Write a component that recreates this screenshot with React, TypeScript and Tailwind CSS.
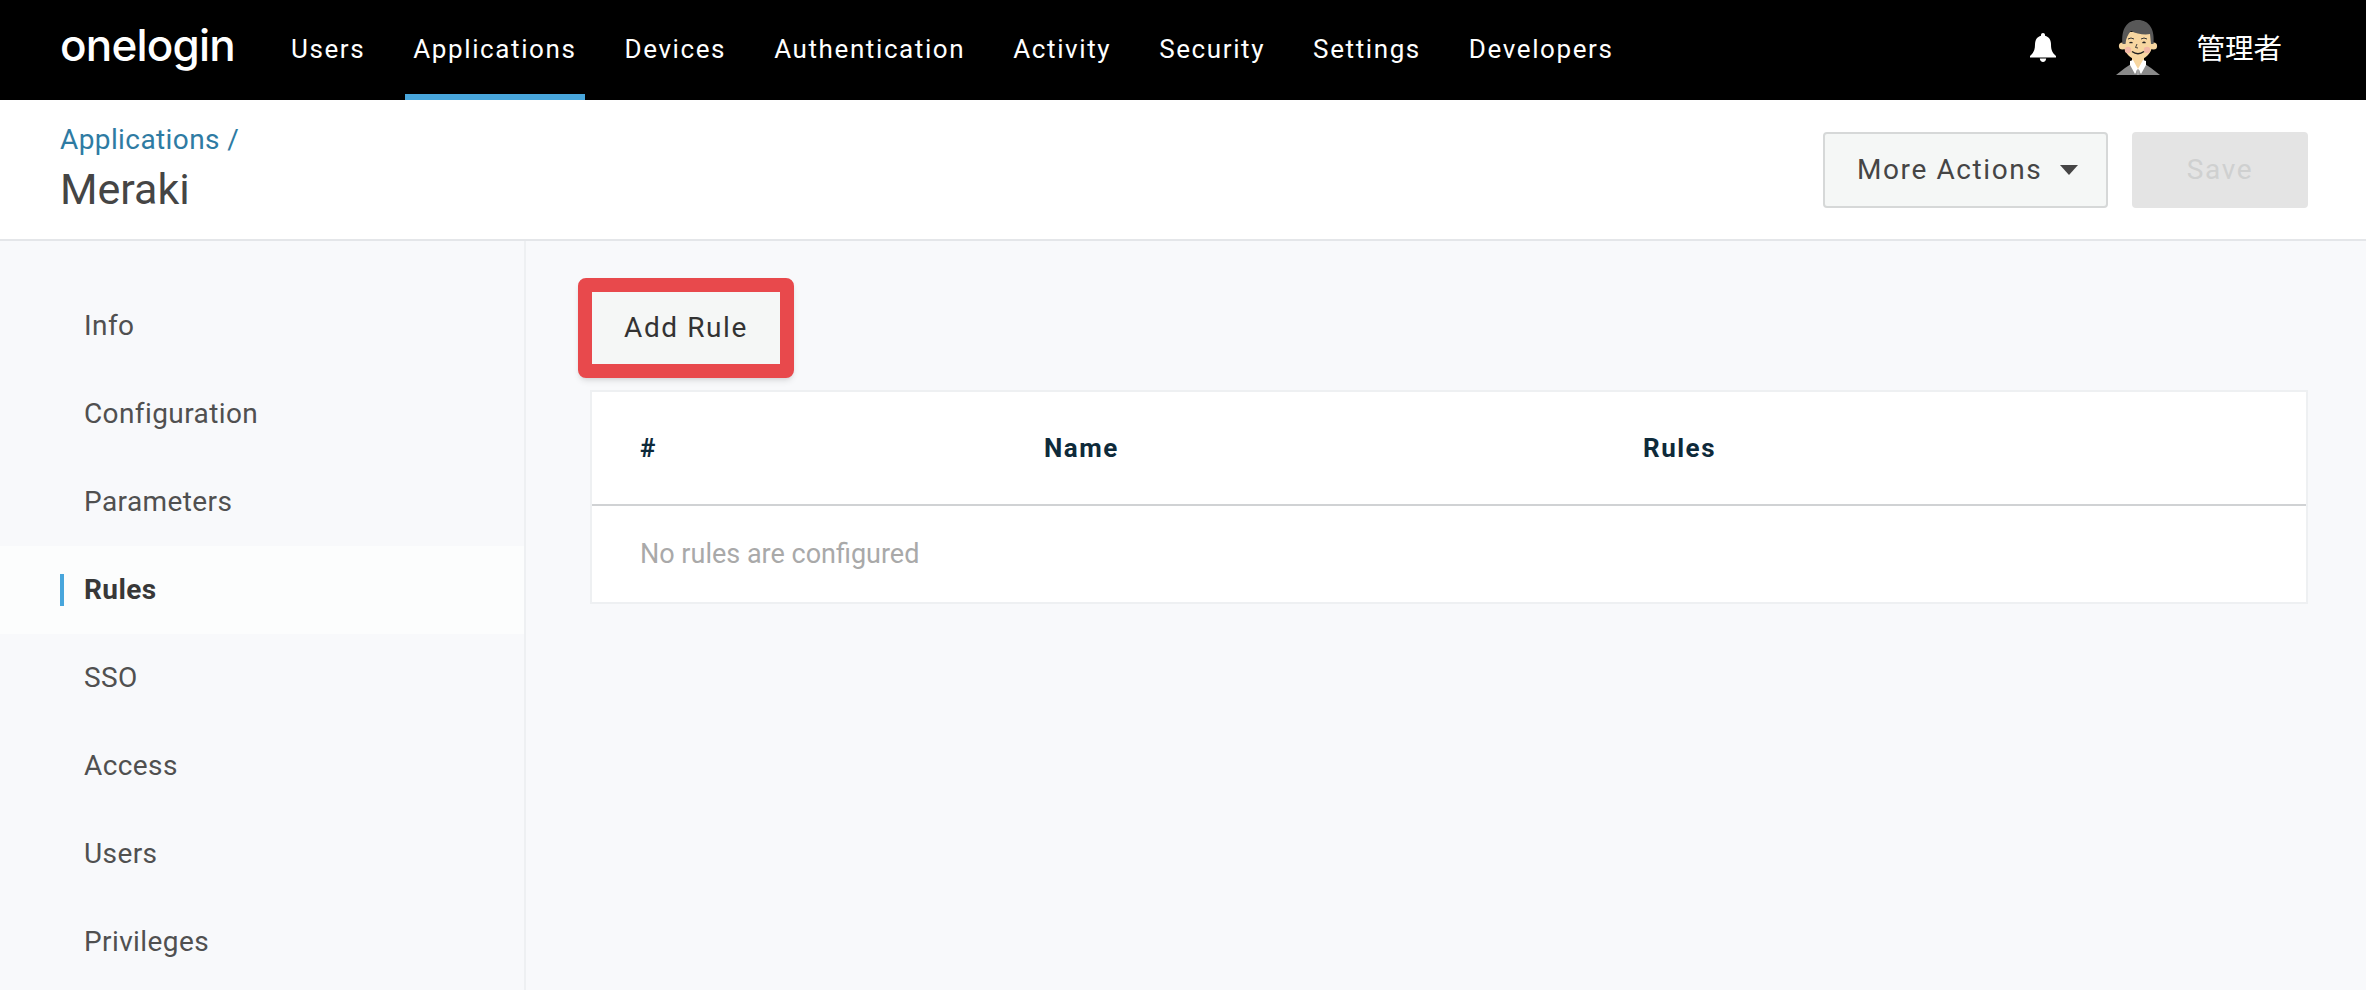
const navItems = [
  "Users",
  "Applications",
  "Devices",
  "Authentication",
  "Activity",
  "Security",
  "Settings",
  "Developers",
];

const sideItems = [
  "Info",
  "Configuration",
  "Parameters",
  "Rules",
  "SSO",
  "Access",
  "Users",
  "Privileges",
];

function Avatar() {
  return (
    <svg viewBox="0 0 44 56" className="h-[56px] w-[44px]">
      <path d="M0 55 L9 48 L15 44 L29 44 L35 48 L44 55 Z" fill="#8a8a8a" />
      <path d="M16 36 H28 V44 L22 50 L16 44 Z" fill="#f7d6a0" />
      <path d="M14 41 L17 40 L22 49 L19 54 L14 45 Z M30 41 L27 40 L22 49 L25 54 L30 45 Z" fill="#ffffff" />
      <path d="M20 51 L22 49 L24 51 L23 55 L21 55 Z" fill="#a5a5a5" />
      <circle cx="6.5" cy="26" r="3.6" fill="#f7d6a0" />
      <circle cx="37.5" cy="26" r="3.6" fill="#f7d6a0" />
      <path d="M8 12 L36 12 L36 26 C36 33 28 40 22 40 C16 40 8 33 8 26 Z" fill="#f7d6a0" />
      <path d="M6.5 24 C5 9 11 0 22 0 C33 0 39 9 37.5 24 L35 24 L34 14 C29 15 20 14 15 11 C12 14 10 18 9.5 24 Z" fill="#585858" />
      <circle cx="12" cy="30" r="3.2" fill="#f2b8a6" />
      <circle cx="31" cy="30" r="3.2" fill="#f2b8a6" />
      <path d="M12 19 Q15 17 18 19 M25 19 Q28 17 31 19" stroke="#333333" strokeWidth="1" fill="none" />
      <path d="M13.5 23 Q15 21.5 16.5 23 M26.5 23 Q28 21.5 29.5 23" stroke="#222222" strokeWidth="1.2" fill="none" />
      <path d="M21 24 L19.5 27.5 L22 28" stroke="#333333" strokeWidth="0.9" fill="none" />
      <path d="M16 31.5 Q22 36 28 31.5" stroke="#222222" strokeWidth="1.4" fill="none" />
    </svg>
  );
}

function Bell() {
  return (
    <svg viewBox="0 0 26 29" className="h-[29px] w-[26px]" fill="#ffffff">
      <path d="M13 0 C14.2 0 15 .9 15 2 L15 2.8 C19 3.8 21 7.2 21 11.5 C21 17 22.5 20 26 23 L26 24.5 L0 24.5 L0 23 C3.5 20 5 17 5 11.5 C5 7.2 7 3.8 11 2.8 L11 2 C11 .9 11.8 0 13 0 Z" />
      <path d="M9.8 25.5 L16.2 25.5 C16 27.6 14.7 29 13 29 C11.3 29 10 27.6 9.8 25.5 Z" />
    </svg>
  );
}

export default function App() {
  return (
    <div className="flex h-[990px] w-full flex-col overflow-hidden bg-[#f8f9fb] font-['Roboto',sans-serif]">
      <header className="flex h-[100px] shrink-0 items-center bg-black pl-[60px] text-white">
        <div className="w-[177px] pb-[10px] font-['Inter',sans-serif] text-[44px] leading-none font-medium tracking-[-0.8px]">
          onelogin
        </div>
        <nav className="ml-[46px] flex h-full">
          {navItems.map((item) => (
            <div
              key={item}
              className={`mr-[32px] flex h-full items-center border-b-[6px] px-[8px] pt-[5px] text-[26px] tracking-[1.6px] ${
                item === "Applications"
                  ? "border-[#48a6dc]"
                  : "border-transparent"
              }`}
            >
              {item}
            </div>
          ))}
        </nav>
        <div className="ml-auto flex items-center pr-[84px] pb-[5px]">
          <Bell />
          <div className="ml-[60px]">
            <Avatar />
          </div>
          <span className="ml-[36px] font-['Noto_Sans_CJK_JP',sans-serif] text-[28.5px] leading-none">
            管理者
          </span>
        </div>
      </header>

      <div className="flex h-[141px] shrink-0 items-center justify-between border-b-2 border-[#e4e6e9] bg-white pr-[58px] pl-[60px]">
        <div className="pb-[3px]">
          <div className="pt-[1px] text-[28px] leading-[32px] tracking-[0.4px] text-[#2e7ba3]">
            Applications /
          </div>
          <div className="mt-[9px] text-[43px] leading-[48px] text-[#454545]">
            Meraki
          </div>
        </div>
        <div className="flex gap-[24px]">
          <div className="flex h-[76px] w-[285px] items-center gap-[18px] rounded-[4px] border-2 border-[#d6d8d8] bg-[#f5f7f6] pl-[32px] text-[28px] tracking-[1.6px] text-[#454545]">
            More Actions
            <svg viewBox="0 0 18 10" className="h-[10px] w-[18px]" fill="#454545">
              <path d="M0 0 H18 L9 10 Z" />
            </svg>
          </div>
          <div className="flex h-[76px] w-[176px] items-center justify-center rounded-[4px] bg-[#e4e4e4] text-[28px] tracking-[1.6px] text-[#cfd0d0]">
            Save
          </div>
        </div>
      </div>

      <div className="flex min-h-0 flex-1">
        <aside className="w-[526px] shrink-0 border-r-2 border-[#eef0f2] pt-[41px]">
          {sideItems.map((item) => {
            const active = item === "Rules";
            return (
              <div
                key={item}
                className={`flex h-[88px] items-center pl-[60px] text-[28px] tracking-[0.4px] ${
                  active
                    ? "bg-[#fcfdfd] font-bold text-[#383838]"
                    : "text-[#505050]"
                }`}
              >
                <span
                  className={`mr-[20px] h-[32px] w-[4px] ${
                    active ? "bg-[#48a6dc]" : "bg-transparent"
                  }`}
                />
                {item}
              </div>
            );
          })}
        </aside>
        <main className="min-w-0 flex-1 pt-[37px] pr-[58px] pl-[52px]">
          <div className="flex h-[100px] w-[216px] items-center justify-center rounded-[8px] border-[14px] border-[#e8494c] bg-[#f5f7f6] text-[28px] tracking-[1.6px] text-[#333333] shadow-md">
            Add Rule
          </div>
          <div className="mt-[12px] ml-[12px] border-2 border-[#eef0f2] bg-white">
            <div className="flex h-[114px] items-center border-b-2 border-[#d0d2d4] pl-[48px] text-[26px] font-bold tracking-[1.5px] text-[#0e2a3a]">
              <div className="w-[404px]">#</div>
              <div className="w-[599px]">Name</div>
              <div>Rules</div>
            </div>
            <div className="flex h-[96px] items-center pl-[48px] text-[27px] text-[#a9a9a9]">
              No rules are configured
            </div>
          </div>
        </main>
      </div>
    </div>
  );
}
